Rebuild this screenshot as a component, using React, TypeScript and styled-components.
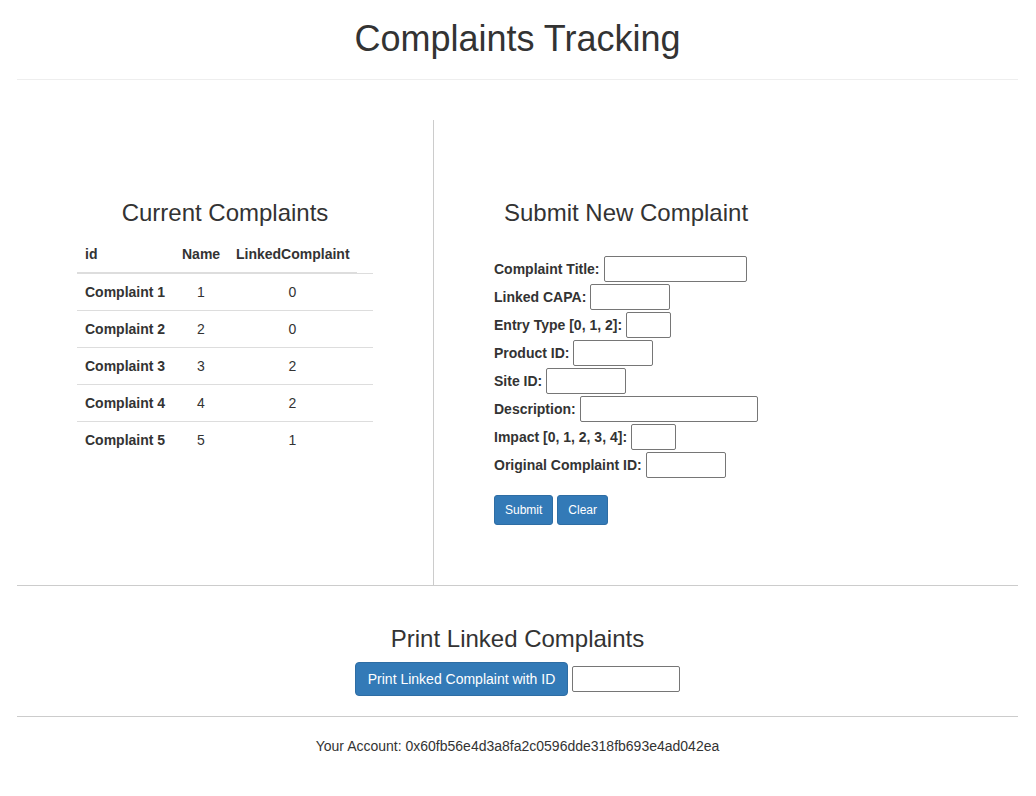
import React from 'react';
import styled, { createGlobalStyle } from 'styled-components';

const GlobalStyle = createGlobalStyle`
  * { box-sizing: border-box; }
  body {
    margin: 0;
    font-family: "Liberation Sans", Arial, Helvetica, sans-serif;
    font-size: 14px;
    line-height: 20px;
    color: #333;
    background: #fff;
  }
`

const Page = styled.div`
  padding: 0 18px 0 17px;
`

const Header = styled.header`
  height: 80px;
  padding-top: 19px;
  border-bottom: 1px solid #eee;
  text-align: center;
`

const Title = styled.h1`
  margin: 0;
  font-size: 36px;
  line-height: 40px;
  font-weight: 500;
`

const Main = styled.div`
  display: grid;
  grid-template-columns: 417px 1fr;
  margin-top: 40px;
  height: 466px;
  border-bottom: 1px solid #ccc;
`

const LeftCol = styled.section`
  border-right: 1px solid #ccc;
  padding: 80px 60px 0;
`

const RightCol = styled.section`
  padding: 80px 0 0 60px;
`

const RightInner = styled.div`
  width: 264px;
`

const SectionTitle = styled.h2`
  margin: 0;
  font-size: 24px;
  line-height: 26px;
  font-weight: 500;
  text-align: center;
`

const Table = styled.table`
  width: 296px;
  margin-top: 10px;
  border-collapse: collapse;
  table-layout: fixed;
`

const Th = styled.th<{ $w: number; $align?: string; $plain?: boolean }>`
  width: ${p => p.$w}px;
  padding: 8px;
  line-height: 20px;
  font-weight: bold;
  text-align: ${p => p.$align || 'center'};
  border-bottom: ${p => (p.$plain ? 'none' : '2px solid #ddd')};
  white-space: nowrap;
`

const Td = styled.td<{ $bold?: boolean }>`
  padding: 8px;
  line-height: 20px;
  border-top: 1px solid #ddd;
  text-align: ${p => (p.$bold ? 'left' : 'center')};
  font-weight: ${p => (p.$bold ? 'bold' : 'normal')};
  white-space: nowrap;
`

const Form = styled.form`
  margin-top: 29px;
`

const FormRow = styled.div`
  display: flex;
  align-items: center;
  gap: 4px;
  height: 28px;
`

const Label = styled.label`
  font-weight: bold;
  white-space: nowrap;
`

const TextInput = styled.input<{ $w: number }>`
  width: ${p => p.$w}px;
  height: 26px;
  padding: 1px 2px;
  border: 1px solid #767676;
  border-radius: 2px;
  background: #fff;
  font: inherit;
`

const Buttons = styled.div`
  display: flex;
  gap: 4px;
  margin-top: 16px;
`

const Button = styled.button<{ $small?: boolean }>`
  padding: ${p => (p.$small ? '5px 10px' : '6px 12px')};
  font-family: inherit;
  font-size: ${p => (p.$small ? '12px' : '14px')};
  line-height: ${p => (p.$small ? '18px' : '20px')};
  color: #fff;
  background-color: #337ab7;
  border: 1px solid #2e6da4;
  border-radius: ${p => (p.$small ? '3px' : '4px')};
  cursor: pointer;
`

const PrintSection = styled.section`
  padding: 40px 0 20px;
  border-bottom: 1px solid #ccc;
`

const PrintRow = styled.div`
  display: flex;
  justify-content: center;
  align-items: center;
  gap: 4px;
  margin-top: 10px;
`

const Footer = styled.footer`
  padding-top: 19px;
  text-align: center;
`

const complaints = [
  { id: 'Complaint 1', name: 1, linked: 0 },
  { id: 'Complaint 2', name: 2, linked: 0 },
  { id: 'Complaint 3', name: 3, linked: 2 },
  { id: 'Complaint 4', name: 4, linked: 2 },
  { id: 'Complaint 5', name: 5, linked: 1 },
]

const fields = [
  { label: 'Complaint Title:', w: 143 },
  { label: 'Linked CAPA:', w: 80 },
  { label: 'Entry Type [0, 1, 2]:', w: 45 },
  { label: 'Product ID:', w: 80 },
  { label: 'Site ID:', w: 80 },
  { label: 'Description:', w: 178 },
  { label: 'Impact [0, 1, 2, 3, 4]:', w: 45 },
  { label: 'Original Complaint ID:', w: 80 },
]

export default function App() {
  return (
    <Page>
      <GlobalStyle />
      <Header>
        <Title>Complaints Tracking</Title>
      </Header>

      <Main>
        <LeftCol>
          <SectionTitle>Current Complaints</SectionTitle>
          <Table>
            <thead>
              <tr>
                <Th $w={97} $align="left">id</Th>
                <Th $w={54}>Name</Th>
                <Th $w={129}>LinkedComplaint</Th>
                <Th $w={16} $plain />
              </tr>
            </thead>
            <tbody>
              {complaints.map(c => (
                <tr key={c.id}>
                  <Td $bold>{c.id}</Td>
                  <Td>{c.name}</Td>
                  <Td>{c.linked}</Td>
                  <Td />
                </tr>
              ))}
            </tbody>
          </Table>
        </LeftCol>

        <RightCol>
          <RightInner>
            <SectionTitle>Submit New Complaint</SectionTitle>
            <Form onSubmit={e => e.preventDefault()}>
              {fields.map(f => (
                <FormRow key={f.label}>
                  <Label>{f.label}</Label>
                  <TextInput type="text" $w={f.w} />
                </FormRow>
              ))}
              <Buttons>
                <Button $small type="submit">Submit</Button>
                <Button $small type="reset">Clear</Button>
              </Buttons>
            </Form>
          </RightInner>
        </RightCol>
      </Main>

      <PrintSection>
        <SectionTitle>Print Linked Complaints</SectionTitle>
        <PrintRow>
          <Button type="button">Print Linked Complaint with ID</Button>
          <TextInput type="text" $w={108} />
        </PrintRow>
      </PrintSection>

      <Footer>Your Account: 0x60fb56e4d3a8fa2c0596dde318fb693e4ad042ea</Footer>
    </Page>
  );
}
